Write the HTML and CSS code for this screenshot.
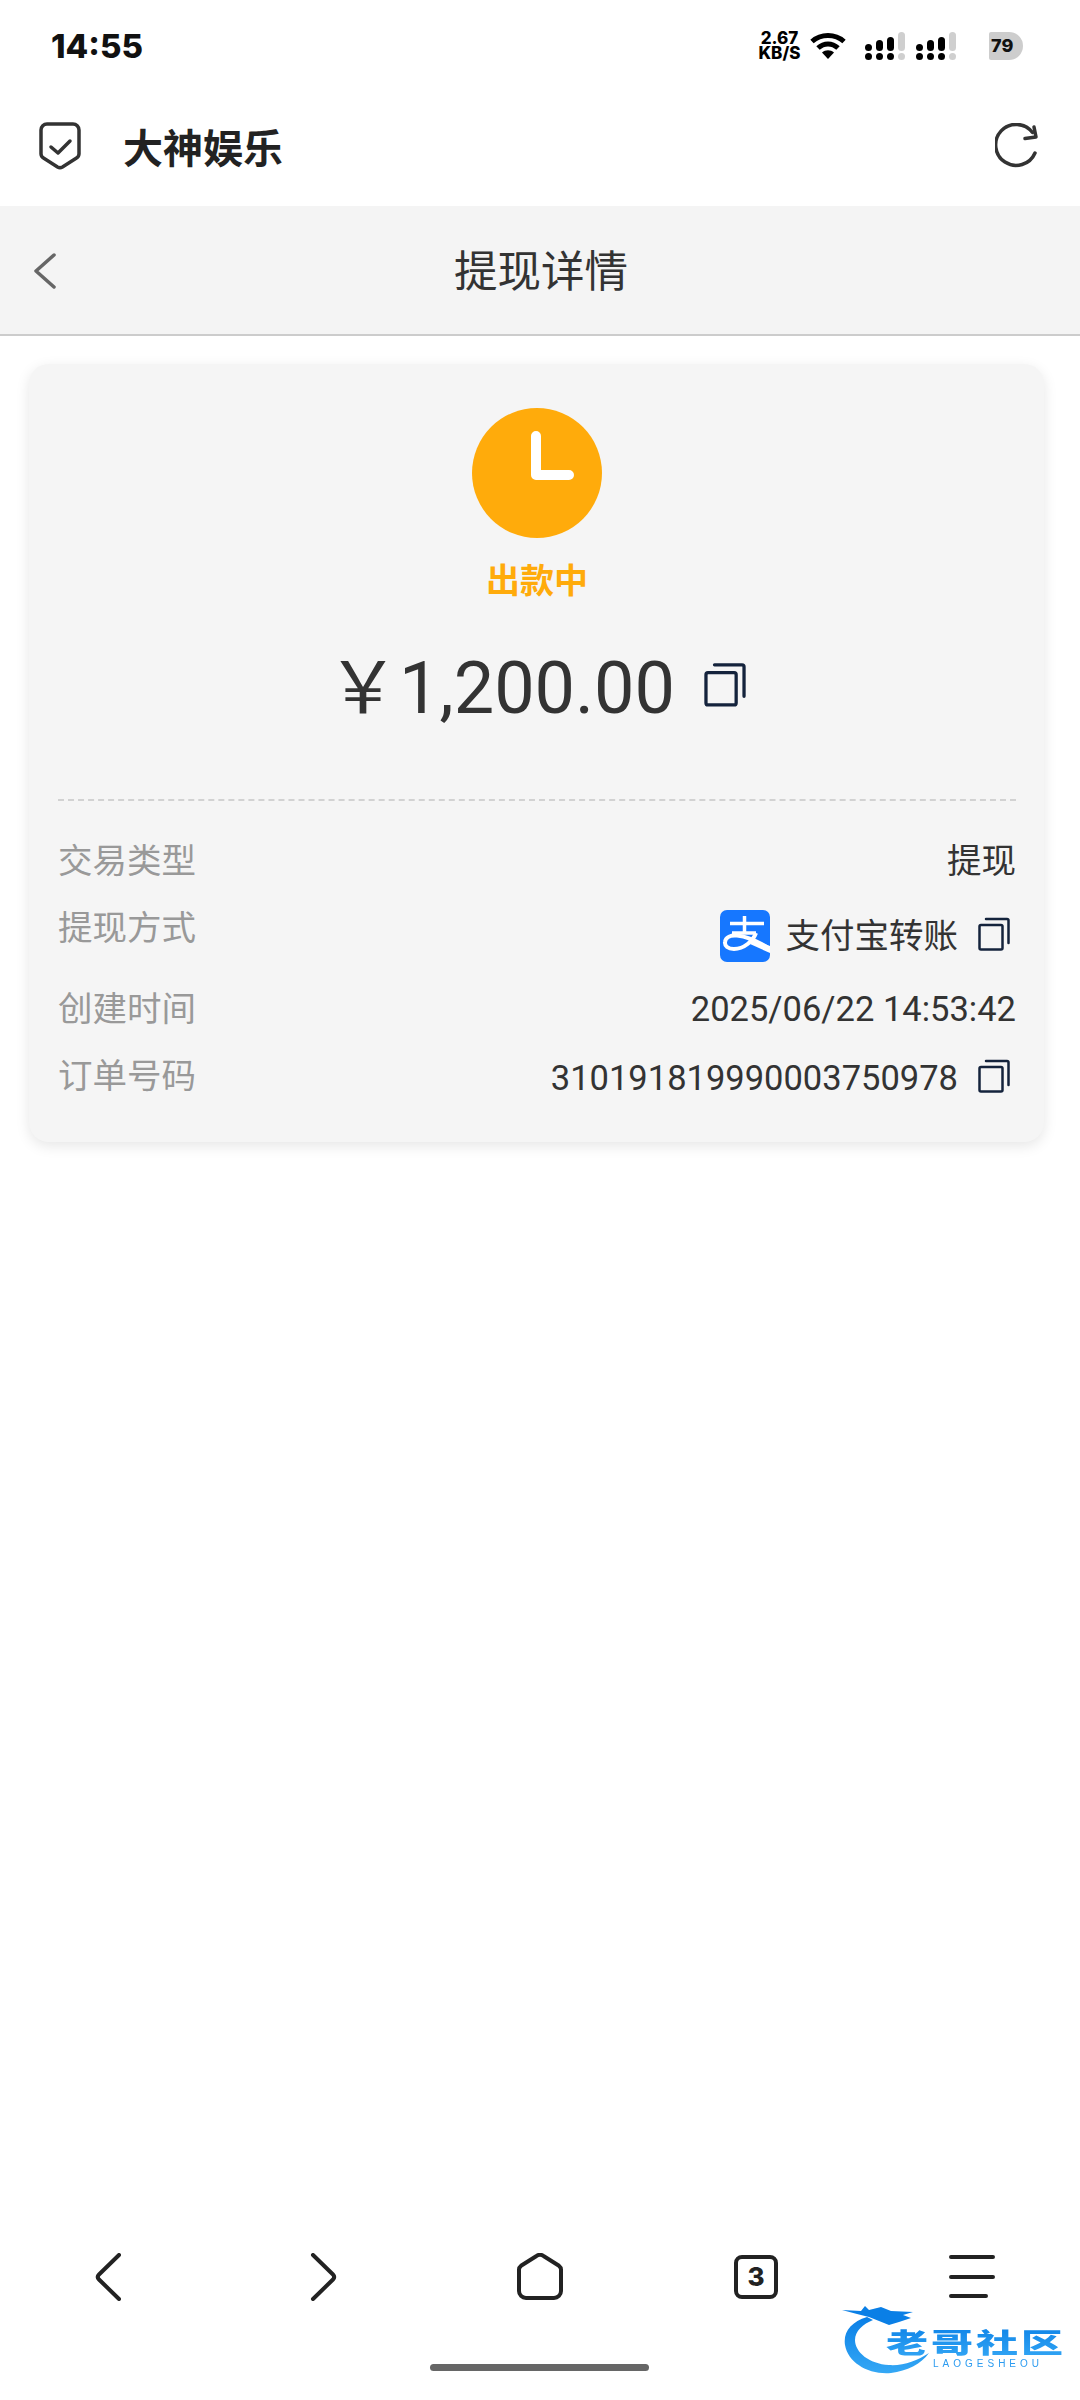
FILE: index.html
```html
<!DOCTYPE html>
<html lang="zh-CN">
<head>
    <meta charset="UTF-8">
    <meta name="viewport" content="width=device-width, initial-scale=1.0">
    <title>提现详情</title>
    <link rel="stylesheet" href="styles.css">
</head>
<body>
    <div class="phone">
        <div class="status-bar">
            <span class="clock">14:55</span>
            <div class="status-icons">
                <div class="net-speed"><span>2.67</span><span>KB/S</span></div>
                <svg class="wifi" width="36" height="28" viewBox="0 0 36 28">
                    <path d="M2 9.500C11 1.500 25 1.500 34 9.500" fill="none" stroke="#000" stroke-width="5"/>
                    <path d="M8 16C14 10.500 22 10.500 28 16" fill="none" stroke="#000" stroke-width="5"/>
                    <path d="M12 20.500C15.500 17.500 20.500 17.500 24 20.500L18 27Z" fill="#000"/>
                </svg>
                <svg class="signal" width="40" height="28" viewBox="0 0 40 28">
                    <rect x="0" y="12" width="7" height="7" rx="3.500"/><rect x="11" y="8" width="7" height="11" rx="3.500"/><rect x="22" y="5" width="7" height="14" rx="3.500"/><rect class="off" x="33" y="0" width="7" height="19" rx="3.500"/>
                    <circle cx="3.500" cy="24.500" r="3.500"/><circle cx="14.500" cy="24.500" r="3.500"/><circle cx="25.500" cy="24.500" r="3.500"/><circle class="off" cx="36.500" cy="24.500" r="3.500"/>
                </svg>
                <svg class="signal" width="40" height="28" viewBox="0 0 40 28">
                    <rect x="0" y="12" width="7" height="7" rx="3.500"/><rect x="11" y="8" width="7" height="11" rx="3.500"/><rect x="22" y="5" width="7" height="14" rx="3.500"/><rect class="off" x="33" y="0" width="7" height="19" rx="3.500"/>
                    <circle cx="3.500" cy="24.500" r="3.500"/><circle cx="14.500" cy="24.500" r="3.500"/><circle cx="25.500" cy="24.500" r="3.500"/><circle class="off" cx="36.500" cy="24.500" r="3.500"/>
                </svg>
                <div class="battery">79</div>
            </div>
        </div>

        <div class="app-bar">
            <svg class="shield" width="42" height="48" viewBox="0 0 42 48">
                <path d="M8 2H34A6 6 0 0 1 40 8V32A5 5 0 0 1 37.500 36L23.500 45A5 5 0 0 1 18.500 45L4.500 36A5 5 0 0 1 2 32V8A6 6 0 0 1 8 2Z" fill="none" stroke="#333" stroke-width="3.500"/>
                <path d="M12 25L19 31L31 19" fill="none" stroke="#333" stroke-width="3.500" stroke-linecap="round" stroke-linejoin="round"/>
            </svg>
            <span class="app-name">大神娱乐</span>
            <svg class="reload" width="46" height="46" viewBox="0 0 46 46">
                <path d="M40 30A20.500 20.500 0 1 1 37.500 9.500" fill="none" stroke="#333" stroke-width="3.500" stroke-linecap="round"/>
                <path d="M30 15.500L41 14L39 4" fill="none" stroke="#333" stroke-width="3.500" stroke-linecap="round" stroke-linejoin="round"/>
            </svg>
        </div>

        <div class="sub-header">
            <svg class="back" width="24" height="38" viewBox="0 0 24 38">
                <path d="M21 3L3 19L21 35" fill="none" stroke="#666" stroke-width="3.500" stroke-linecap="round" stroke-linejoin="round"/>
            </svg>
            <h1>提现详情</h1>
        </div>

        <div class="content">
            <div class="detail-card">
                <svg class="status-circle" width="130" height="130" viewBox="0 0 130 130">
                    <circle cx="65" cy="65" r="65" fill="#ffab0b"/>
                    <path d="M64 28V67H97" fill="none" stroke="#fff" stroke-width="10" stroke-linecap="round" stroke-linejoin="round"/>
                </svg>
                <div class="status-text">出款中</div>
                <div class="amount-row">
                    <span class="amount"><span class="yen">￥</span>1,200.00</span>
                    <svg class="copy copy-lg" viewBox="0 0 32 34">
                        <rect x="1.500" y="8" width="23" height="24.500" rx="1.500" fill="none" stroke="#14233c" stroke-width="2.500"/>
                        <path d="M8 2H29A1.500 1.500 0 0 1 30.500 3.500V26" fill="none" stroke="#14233c" stroke-width="2.500" stroke-linecap="round"/>
                    </svg>
                </div>

                <div class="detail-rows">
                    <div class="row">
                        <span class="label">交易类型</span>
                        <span class="value">提现</span>
                    </div>
                    <div class="row">
                        <span class="label">提现方式</span>
                        <div class="value pay-method">
                            <svg class="alipay" width="50" height="52" viewBox="0 0 50 52">
                                <rect width="50" height="52" rx="7" fill="#1677ff"/>
                                <path d="M10 13.500H44M24.500 6V23M12 23H36" fill="none" stroke="#fff" stroke-width="3.500"/>
                                <path d="M36 23C33 31 24 39 14 39C8 39 4.500 36 5 32C5.500 27 11 25 17 25.500C27 26.500 39 32 50 39" fill="none" stroke="#fff" stroke-width="4"/>
                                <path d="M34 30L50 36V43L30 34Z" fill="#fff"/>
                            </svg>
                            <span>支付宝转账</span>
                            <svg class="copy" viewBox="0 0 32 34">
                                <rect x="1.500" y="8" width="23" height="24.500" rx="1.500" fill="none" stroke="#14233c" stroke-width="2.500"/>
                                <path d="M8 2H29A1.500 1.500 0 0 1 30.500 3.500V26" fill="none" stroke="#14233c" stroke-width="2.500" stroke-linecap="round"/>
                            </svg>
                        </div>
                    </div>
                    <div class="row">
                        <span class="label">创建时间</span>
                        <span class="value">2025/06/22 14:53:42</span>
                    </div>
                    <div class="row">
                        <span class="label">订单号码</span>
                        <div class="value order-no">
                            <span>310191819990003750978</span>
                            <svg class="copy" viewBox="0 0 32 34">
                                <rect x="1.500" y="8" width="23" height="24.500" rx="1.500" fill="none" stroke="#14233c" stroke-width="2.500"/>
                                <path d="M8 2H29A1.500 1.500 0 0 1 30.500 3.500V26" fill="none" stroke="#14233c" stroke-width="2.500" stroke-linecap="round"/>
                            </svg>
                        </div>
                    </div>
                </div>
            </div>
        </div>

        <div class="bottom-nav">
            <svg width="48" height="48" viewBox="0 0 48 48"><path d="M35 2L15 21.500Q12.500 24 15 26.500L35 46" class="nav-line"/></svg>
            <svg width="48" height="48" viewBox="0 0 48 48"><path d="M13 2L33 21.500Q35.500 24 33 26.500L13 46" class="nav-line"/></svg>
            <svg width="48" height="48" viewBox="0 0 48 48"><path d="M3 16.500A5 5 0 0 1 5 12.800L20.500 3A6 6 0 0 1 27.500 3L43 12.800A5 5 0 0 1 45 16.500V38A7 7 0 0 1 38 45H10A7 7 0 0 1 3 38Z" class="nav-line"/></svg>
            <div class="tab-count">3</div>
            <svg width="48" height="48" viewBox="0 0 48 48"><path d="M3 4H45M3 24H45M3 43H38" class="nav-line"/></svg>
        </div>
        <div class="home-indicator"></div>

        <!-- community stamp sits over the bottom right corner -->
        <svg class="stamp" width="226" height="80" viewBox="0 0 226 80">
            <defs>
                <linearGradient id="stampBlue" x1="0" y1="0" x2="0" y2="1">
                    <stop offset="0" stop-color="#0a7fe6"/>
                    <stop offset="1" stop-color="#35a8f5"/>
                </linearGradient>
            </defs>
            <path d="M26 19C10 24 2 34 4 47C7 65 28 77 50 75C66 73 80 66 88 55C76 63 62 68 48 67C28 66 14 54 14 42C14 33 22 26 32 22Z" fill="url(#stampBlue)"/>
            <path d="M1 12L20 13L24 8L28 12L40 9L50 13L72 14L62 17L70 20L58 24L48 27L38 23L28 19L16 16Z" fill="#0a7fe6"/>
            <text class="stamp-cn" transform="translate(45 55) scale(1 0.66)" fill="url(#stampBlue)">老哥社区</text>
            <text class="stamp-en" x="92" y="69">LAOGESHEOU</text>
        </svg>
    </div>
</body>
</html>
```

FILE: styles.css
```css
* {
    box-sizing: border-box;
}

body {
    margin: 0;
    background: #fff;
    font-family: Roboto, 'Noto Sans CJK SC', sans-serif;
    color: #333;
}

.phone {
    position: relative;
    width: 1080px;
    height: 2400px;
    display: flex;
    flex-direction: column;
    overflow: hidden;
}

/* status bar */
.status-bar {
    height: 92px;
    padding: 0 57px 0 51px;
    display: flex;
    justify-content: space-between;
    align-items: center;
}

.clock {
    font-family: Inter, sans-serif;
    font-weight: 800;
    font-size: 33px;
    color: #111;
}

.status-icons {
    display: flex;
    align-items: center;
}

.net-speed {
    display: flex;
    flex-direction: column;
    align-items: center;
    width: 45px;
    font-family: Inter, sans-serif;
    font-weight: 800;
    font-size: 17px;
    line-height: 15px;
    color: #000;
}

.wifi {
    margin-left: 8px;
}

.signal {
    margin-left: 11px;
    fill: #000;
}

.wifi + .signal {
    margin-left: 19px;
}

.signal .off {
    fill: #cfcfcf;
}

.battery {
    width: 34px;
    height: 28px;
    margin-left: 33px;
    padding-left: 2px;
    background: #cdcdcd;
    border-radius: 2px 14px 14px 2px;
    font-family: Inter, sans-serif;
    font-weight: 800;
    font-size: 18px;
    line-height: 28px;
    color: #111;
    white-space: nowrap;
}

/* app title bar */
.app-bar {
    height: 114px;
    padding: 0 39px 6px 39px;
    display: flex;
    align-items: center;
}

.app-name {
    margin-left: 42px;
    font-size: 40px;
    font-weight: 700;
    color: #222;
}

.reload {
    margin-left: auto;
}

/* page header */
.sub-header {
    position: relative;
    height: 130px;
    background: #f4f4f4;
    border-bottom: 2px solid #ccc;
    display: flex;
    align-items: center;
    justify-content: center;
}

.back {
    position: absolute;
    left: 33px;
    top: 46px;
}

.sub-header h1 {
    margin: 0 0 3px 2px;
    font-size: 43.500px;
    font-weight: 400;
    color: #333;
}

.content {
    flex: 1;
    padding: 28px 36px 0 29px;
}

.detail-card {
    height: 778px;
    padding: 44px 28px 0 29px;
    background: #f5f5f5;
    border-radius: 20px;
    box-shadow: 0 4px 14px rgba(0, 0, 0, 0.1);
    display: flex;
    flex-direction: column;
    align-items: center;
}

.status-text {
    margin-top: 19px;
    font-size: 34px;
    line-height: 48px;
    font-weight: 700;
    color: #ffab0b;
}

.amount-row {
    margin-top: 34px;
    margin-left: -1px;
    height: 90px;
    display: flex;
    align-items: center;
}

.amount {
    margin-bottom: 6px;
    font-size: 72px;
    color: #333;
    white-space: nowrap;
}

.yen {
    font-family: 'Noto Sans CJK SC', sans-serif;
}

.copy {
    width: 32px;
    height: 34px;
    flex: none;
}

.copy-lg {
    width: 42px;
    height: 45px;
    margin-left: 29px;
}

.detail-rows {
    align-self: stretch;
    margin-top: 70px;
    padding-top: 36px;
    border-top: 2px dashed #d2d2d2;
    display: flex;
    flex-direction: column;
    gap: 19px;
}

.row {
    display: flex;
    justify-content: space-between;
    align-items: flex-start;
    font-size: 34.500px;
    line-height: 48px;
}

.label {
    color: #999;
}

.value {
    color: #333;
}

.pay-method,
.order-no {
    display: flex;
    align-items: center;
    gap: 20px;
    padding-right: 6px;
}

.pay-method .copy,
.order-no .copy {
    margin-bottom: 5px;
}

.pay-method {
    margin: 5px 0 3px;
    height: 54px;
}

.alipay {
    margin-right: -4px;
}

.order-no {
    height: 52px;
}

/* browser toolbar */
.bottom-nav {
    height: 48px;
    margin-bottom: 99px;
    display: grid;
    grid-template-columns: repeat(5, 1fr);
    justify-items: center;
    align-items: center;
}

.nav-line {
    fill: none;
    stroke: #222;
    stroke-width: 4px;
    stroke-linecap: round;
    stroke-linejoin: round;
}

.tab-count {
    width: 44px;
    height: 44px;
    border: 4px solid #222;
    border-radius: 8px;
    text-align: center;
    font-family: Inter, sans-serif;
    font-weight: 800;
    font-size: 26px;
    line-height: 36px;
    color: #222;
}

.home-indicator {
    position: absolute;
    left: 430px;
    bottom: 29px;
    width: 219px;
    height: 7px;
    border-radius: 4px;
    background: #666;
}

.stamp {
    position: absolute;
    left: 841px;
    top: 2298px;
    filter: blur(0.6px);
}

.stamp-cn {
    font-family: 'Noto Sans CJK SC', sans-serif;
    font-weight: 900;
    font-size: 42px;
    letter-spacing: 3px;
}

.stamp-en {
    font-family: 'Liberation Sans', sans-serif;
    font-size: 10px;
    letter-spacing: 4px;
    fill: #2d9cf0;
}
```
